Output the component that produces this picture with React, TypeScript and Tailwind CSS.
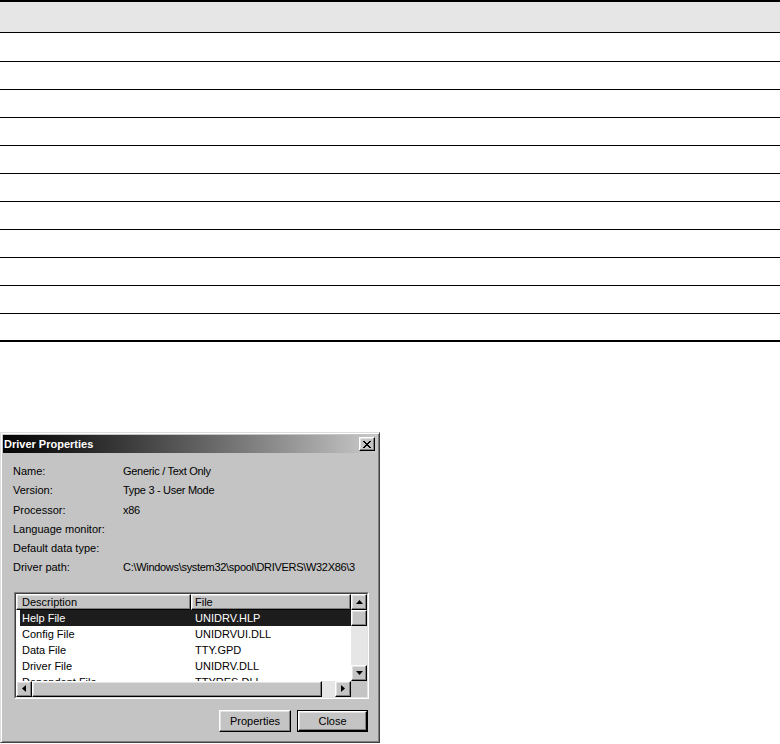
import React from "react";

const font = "font-['Liberation_Sans','Arial',sans-serif]";
const raised =
  "bg-[#c4c4c4] border border-t-white border-l-white border-r-black border-b-black shadow-[inset_-1px_-1px_#808080,inset_1px_1px_#e2e2e2]";

const labels: [string, string][] = [
  ["Name:", "Generic / Text Only"],
  ["Version:", "Type 3 - User Mode"],
  ["Processor:", "x86"],
  ["Language monitor:", ""],
  ["Default data type:", ""],
  ["Driver path:", "C:\\Windows\\system32\\spool\\DRIVERS\\W32X86\\3"],
];

const files: [string, string][] = [
  ["Help File", "UNIDRV.HLP"],
  ["Config File", "UNIDRVUI.DLL"],
  ["Data File", "TTY.GPD"],
  ["Driver File", "UNIDRV.DLL"],
  ["Dependent File", "TTYRES.DLL"],
];

function Arrow({ dir }: { dir: "up" | "down" | "left" | "right" }) {
  const vertical = dir === "up" || dir === "down";
  const pts = {
    up: "0,4 3.5,0 7,4",
    down: "0,0 7,0 3.5,4",
    left: "4,0 4,7 0,3.5",
    right: "0,0 0,7 4,3.5",
  }[dir];
  return (
    <svg width={vertical ? 7 : 4} height={vertical ? 4 : 7} viewBox={vertical ? "0 0 7 4" : "0 0 4 7"}>
      <polygon points={pts} fill="#000" />
    </svg>
  );
}

function CloseGlyph() {
  const px = [
    [0, 0], [1, 0], [6, 0], [7, 0],
    [1, 1], [2, 1], [5, 1], [6, 1],
    [2, 2], [3, 2], [4, 2], [5, 2],
    [3, 3], [4, 3],
    [2, 4], [3, 4], [4, 4], [5, 4],
    [1, 5], [2, 5], [5, 5], [6, 5],
    [0, 6], [1, 6], [6, 6], [7, 6],
  ];
  return (
    <svg width="8" height="7" viewBox="0 0 8 7" shapeRendering="crispEdges">
      {px.map(([x, y], i) => (
        <rect key={i} x={x} y={y} width="1" height="1" fill="#000" />
      ))}
    </svg>
  );
}

function EmptyTable() {
  const rows = Array.from({ length: 11 }, (_, i) => i);
  return (
    <div className="w-full">
      <div className="h-[33px] border-t-2 border-b border-black bg-[#e6e6e6]" />
      {rows.map((i) => (
        <div
          key={i}
          className={
            i === 0
              ? "h-[29px] border-b border-black bg-white"
              : i === 10
                ? "h-[28px] border-b-2 border-black bg-white"
                : "h-[28px] border-b border-black bg-white"
          }
        />
      ))}
    </div>
  );
}

function FileList() {
  return (
    <div className="ml-[11px] mt-[14px] h-[107px] w-[355px] border border-t-[#808080] border-l-[#808080] border-r-white border-b-white">
      <div className="flex h-full flex-col border border-t-[#404040] border-l-[#404040] border-r-[#e2e2e2] border-b-[#e2e2e2]">
        <div className="flex h-[87px]">
          <div className="flex-1 overflow-hidden bg-white">
            <div className="flex h-[16px] leading-[14px]">
              <div className={`${raised} w-[175px] pl-[5px]`}>Description</div>
              <div className={`${raised} flex-1 pl-[3px]`}>File</div>
            </div>
            {files.map(([d, f], i) => (
              <div
                key={d}
                className={
                  i === 0
                    ? "ml-[4px] flex h-[16px] bg-[#1c1c1c] leading-[16px] text-white"
                    : "ml-[4px] flex h-[16px] leading-[16px] text-black"
                }
              >
                <div className="w-[171px] pl-[2px]">{d}</div>
                <div className="pl-[4px]">{f}</div>
              </div>
            ))}
          </div>
          <div className="flex w-[16px] flex-col">
            <div className={`${raised} flex h-[16px] items-center justify-center`}>
              <Arrow dir="up" />
            </div>
            <div className={`${raised} h-[16px]`} />
            <div className="flex-1 bg-[#e6e6e6]" />
            <div className={`${raised} flex h-[16px] items-center justify-center`}>
              <Arrow dir="down" />
            </div>
          </div>
        </div>
        <div className="flex h-[16px]">
          <div className={`${raised} flex w-[16px] items-center justify-center`}>
            <Arrow dir="left" />
          </div>
          <div className={`${raised} w-[290px]`} />
          <div className="flex-1 bg-[#e6e6e6]" />
          <div className={`${raised} flex w-[16px] items-center justify-center`}>
            <Arrow dir="right" />
          </div>
          <div className="w-[16px] bg-[#c4c4c4]" />
        </div>
      </div>
    </div>
  );
}

function DriverDialog() {
  return (
    <div
      className={`${font} mt-[90px] flex h-[311px] w-[380px] flex-col border border-t-[#dcdcdc] border-l-[#dcdcdc] border-r-[#404040] border-b-[#404040] bg-[#c4c4c4] p-[2px] text-[11px] text-black shadow-[inset_1px_1px_#fff,inset_-1px_-1px_#808080]`}
    >
      <div className="flex h-[18px] items-center justify-between bg-linear-to-r from-[#050505] to-[#cacaca] pl-[1px] pr-[2px]">
        <span className="text-[11px] font-bold text-white">Driver Properties</span>
        <div className={`${raised} flex h-[14px] w-[16px] items-center justify-center`}>
          <CloseGlyph />
        </div>
      </div>

      <div className="grid grid-cols-[110px_1fr] pl-[10px] pt-[9px] leading-[19.3px]">
        {labels.map(([k, v]) => (
          <React.Fragment key={k}>
            <div>{k}</div>
            <div className="tracking-[-0.3px]">{v}</div>
          </React.Fragment>
        ))}
      </div>

      <FileList />

      <div className="mt-[11px] flex justify-end gap-[6px] pr-[9px]">
        <button className={`${raised} h-[22px] w-[72px] text-[11px]`}>Properties</button>
        <div className="h-[22px] w-[71px] border border-black">
          <button className={`${raised} h-full w-full text-[11px]`}>Close</button>
        </div>
      </div>
    </div>
  );
}

export default function App() {
  return (
    <div className={`${font} min-h-[744px] w-[780px] bg-white`}>
      <EmptyTable />
      <DriverDialog />
    </div>
  );
}
